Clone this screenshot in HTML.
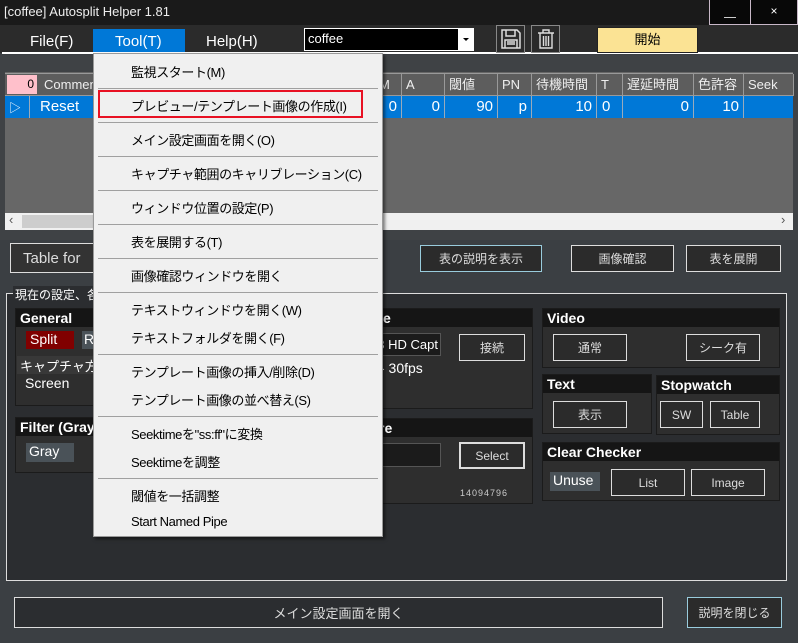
<!DOCTYPE html><html><head><meta charset="utf-8"><style>
*{margin:0;padding:0;box-sizing:border-box}
body{width:798px;height:643px;background:#3b3f43;position:relative;overflow:hidden;font-family:"Liberation Sans","Noto Sans CJK JP",sans-serif;color:#fff;font-size:14px}
.a{position:absolute}
.btn{position:absolute;border:1px solid #ddd;background:#2b2b2b;color:#ddd;font-size:12px;display:flex;align-items:center;justify-content:center}
.pn{position:absolute;background:#2e2e2e;border:1px solid #1b1b1b}
.ph{position:absolute;left:0;right:0;top:0;height:18px;background:#151515;font-weight:bold;font-size:14px;padding-left:4px;line-height:18px}
.mi{position:absolute;left:37px;font-size:13px;color:#000;letter-spacing:-0.4px;white-space:nowrap}
.sep{position:absolute;left:4px;right:4px;height:1px;background:#a0a0a0}
.hc{position:absolute;top:0;height:22px;border-right:1px solid #999;font-size:13px;line-height:22px;padding-left:4px;color:#eee;white-space:nowrap;overflow:hidden}
.rc{position:absolute;top:0;height:22px;border-right:1px solid #9ab;font-size:15px;line-height:22px;text-align:right;padding-right:4px}
</style></head><body>
<div class="a" style="left:0;top:0;width:798px;height:25px;background:#1a1a1a"></div>
<div class="a" style="left:4px;top:4px;font-size:13px;color:#eee">[coffee] Autosplit Helper 1.81</div>
<div class="a" style="left:709px;top:0;width:42px;height:25px;background:#080808;border:1px solid #c8b8c8;border-top:none"></div>
<div class="a" style="left:751px;top:0;width:47px;height:25px;background:#080808;border:1px solid #c8b8c8;border-top:none;border-left:none;text-align:center;font-size:12px;line-height:22px">×</div>
<div class="a" style="left:724px;top:17px;width:12px;height:1px;background:#ccc"></div>
<div class="a" style="left:0;top:25px;width:798px;height:28px;background:#2b2b2b"></div>
<div class="a" style="left:93px;top:29px;width:92px;height:24px;background:#0078d7"></div>
<div class="a" style="left:30px;top:33px;font-size:15px">File(F)</div>
<div class="a" style="left:115px;top:33px;font-size:15px">Tool(T)</div>
<div class="a" style="left:206px;top:33px;font-size:15px">Help(H)</div>
<div class="a" style="left:2px;top:52px;width:796px;height:2px;background:#fff"></div>
<div class="a" style="left:304px;top:28px;width:170px;height:23px;background:#000;border:1px solid #fff;font-size:13px;padding-left:3px;line-height:20px">coffee</div>
<div class="a" style="left:458px;top:29px;width:15px;height:21px;background:#fff"></div>
<div class="a" style="left:463px;top:38px;border-left:3px solid transparent;border-right:3px solid transparent;border-top:3px solid #000"></div>
<div class="a" style="left:496px;top:25px;width:29px;height:28px;border:1px solid #888;background:#2a2a2a"></div>
<svg class="a" style="left:500px;top:29px" width="22" height="20" viewBox="0 0 22 20"><path d="M2 1h15l3 3v15H2z M6 1v6h9V1 M5 11h12v8H5z M7 13h8M7 15h8" fill="none" stroke="#ddd" stroke-width="1.5"/></svg>
<div class="a" style="left:531px;top:25px;width:29px;height:28px;border:1px solid #888;background:#2a2a2a"></div>
<svg class="a" style="left:537px;top:29px" width="18" height="20" viewBox="0 0 18 20"><path d="M1 4h16M6 4V1h6v3M3 4v15h12V4M6.5 7v10M9 7v10M11.5 7v10" fill="none" stroke="#ddd" stroke-width="1.4"/></svg>
<div class="a" style="left:597px;top:27px;width:101px;height:26px;background:#fbe394;border:1px solid #222;color:#000;font-size:13px;text-align:center;line-height:24px">開始</div>

<div class="a" style="left:0;top:55px;width:798px;height:185px;background:#3f4245"></div>
<div class="a" style="left:5px;top:72px;width:788px;height:141px;background:#676767"></div>
<div class="a" style="left:5px;top:73px;width:788px;height:23px;background:#5d5d5d;border-top:1px solid #999;border-bottom:1px solid #999">
<div class="a" style="left:2px;top:1px;width:30px;height:19px;background:#ffc0cb;color:#000;font-size:12px;text-align:right;padding-right:3px;line-height:19px">0</div>
<div class="hc" style="left:35px;width:335px">Comment</div>
<div class="hc" style="left:370px;width:27px">M</div>
<div class="hc" style="left:397px;width:43px">A</div>
<div class="hc" style="left:440px;width:53px">閾値</div>
<div class="hc" style="left:493px;width:34px">PN</div>
<div class="hc" style="left:527px;width:65px">待機時間</div>
<div class="hc" style="left:592px;width:26px">T</div>
<div class="hc" style="left:618px;width:71px">遅延時間</div>
<div class="hc" style="left:689px;width:50px">色許容</div>
<div class="hc" style="left:739px;width:50px">Seek</div>
</div>
<div class="a" style="left:5px;top:96px;width:788px;height:22px;background:#0078d7">
<div class="a" style="left:4px;top:3px;font-size:12px">▷</div>
<div class="rc" style="left:20px;width:1px"></div>
<div class="a" style="left:35px;top:2px;font-size:15px">Reset</div>
<div class="rc" style="left:370px;width:27px">0</div>
<div class="rc" style="left:397px;width:43px">0</div>
<div class="rc" style="left:440px;width:53px">90</div>
<div class="rc" style="left:493px;width:34px">p</div>
<div class="rc" style="left:527px;width:65px">10</div>
<div class="rc" style="left:592px;width:26px;text-align:left;padding-left:5px">0</div>
<div class="rc" style="left:618px;width:71px">0</div>
<div class="rc" style="left:689px;width:50px">10</div>
</div>
<div class="a" style="left:5px;top:213px;width:788px;height:17px;background:#f0f0f0"></div>
<div class="a" style="left:22px;top:215px;width:300px;height:13px;background:#cdcdcd"></div>
<div class="a" style="left:9px;top:212px;color:#555;font-size:13px">‹</div>
<div class="a" style="left:781px;top:212px;color:#555;font-size:13px">›</div>

<div class="btn" style="left:10px;top:243px;width:86px;height:30px;font-size:15px;justify-content:flex-start;padding-left:12px;background:#333">Table for</div>
<div class="btn" style="left:420px;top:245px;width:122px;height:27px;border-color:#9cd">表の説明を表示</div>
<div class="btn" style="left:571px;top:245px;width:103px;height:27px">画像確認</div>
<div class="btn" style="left:686px;top:245px;width:95px;height:27px">表を展開</div>

<div class="a" style="left:6px;top:293px;width:781px;height:288px;background:#2b2d30;border:1px solid #ddd"></div>
<div class="a" style="left:13px;top:286px;background:#2b2d30;font-size:12px;padding:0 2px">現在の設定、各</div>

<div class="pn" style="left:15px;top:308px;width:355px;height:98px"><div class="ph">General</div></div>
<div class="a" style="left:26px;top:331px;width:48px;height:18px;background:#800000;font-size:14px;padding-left:4px">Split</div>
<div class="a" style="left:82px;top:331px;width:15px;height:18px;background:#4a5258;font-size:14px;padding-left:2px">R</div>
<div class="a" style="left:17px;top:356px;width:80px;height:18px;background:#383838;font-size:13px;padding-left:3px;overflow:hidden;white-space:nowrap">キャプチャ方式</div>
<div class="a" style="left:25px;top:375px;font-size:14px">Screen</div>
<div class="pn" style="left:15px;top:417px;width:355px;height:56px"><div class="ph">Filter (Gray)</div></div>
<div class="a" style="left:26px;top:443px;width:48px;height:19px;background:#4a5258;font-size:14px;padding-left:3px">Gray</div>

<div class="pn" style="left:360px;top:308px;width:173px;height:101px"><div class="ph" style="padding-left:22px">e</div></div>
<div class="a" style="left:365px;top:333px;width:76px;height:23px;background:#1b1b1b;border:1px solid #555;font-size:13px;text-align:right;padding-right:2px;line-height:21px;overflow:hidden;white-space:nowrap">3 HD Capt</div>
<div class="btn" style="left:459px;top:334px;width:66px;height:27px">接続</div>
<div class="a" style="left:380px;top:360px;font-size:14px">- 30fps</div>
<div class="pn" style="left:360px;top:418px;width:173px;height:86px"><div class="ph" style="padding-left:18px">re</div></div>
<div class="a" style="left:365px;top:443px;width:76px;height:24px;background:#1b1b1b;border:1px solid #555"></div>
<div class="btn" style="left:459px;top:442px;width:66px;height:27px;border-width:2px">Select</div>
<div class="a" style="left:460px;top:488px;font-size:9px;color:#ccc;letter-spacing:1px">14094796</div>

<div class="pn" style="left:542px;top:308px;width:238px;height:60px"><div class="ph">Video</div></div>
<div class="btn" style="left:553px;top:334px;width:74px;height:27px">通常</div>
<div class="btn" style="left:686px;top:334px;width:74px;height:27px">シーク有</div>
<div class="pn" style="left:542px;top:374px;width:110px;height:60px"><div class="ph">Text</div></div>
<div class="btn" style="left:553px;top:401px;width:74px;height:27px">表示</div>
<div class="pn" style="left:656px;top:375px;width:124px;height:60px"><div class="ph">Stopwatch</div></div>
<div class="btn" style="left:660px;top:401px;width:43px;height:27px">SW</div>
<div class="btn" style="left:710px;top:401px;width:50px;height:27px">Table</div>
<div class="pn" style="left:542px;top:442px;width:238px;height:59px"><div class="ph">Clear Checker</div></div>
<div class="a" style="left:550px;top:472px;width:50px;height:19px;background:#4a5258;font-size:14px;padding-left:3px">Unuse</div>
<div class="btn" style="left:611px;top:469px;width:74px;height:27px">List</div>
<div class="btn" style="left:691px;top:469px;width:74px;height:27px">Image</div>

<div class="btn" style="left:14px;top:597px;width:649px;height:31px;font-size:13px;background:#2b2d30">メイン設定画面を開く</div>
<div class="btn" style="left:687px;top:597px;width:95px;height:31px;border-color:#9cd">説明を閉じる</div>

<div class="a" style="left:93px;top:53px;width:290px;height:484px;background:#f0f0f0;border:1px solid #999;box-shadow:2px 2px 3px rgba(0,0,0,.5)">
<div class="mi" style="top:8px">監視スタート(M)</div>
<div class="sep" style="top:34px"></div>
<div class="a" style="left:4px;top:36px;width:265px;height:28px;border:2px solid #e81123"></div>
<div class="mi" style="top:42px">プレビュー/テンプレート画像の作成(I)</div>
<div class="sep" style="top:68px"></div>
<div class="mi" style="top:76px">メイン設定画面を開く(O)</div>
<div class="sep" style="top:102px"></div>
<div class="mi" style="top:110px">キャプチャ範囲のキャリブレーション(C)</div>
<div class="sep" style="top:136px"></div>
<div class="mi" style="top:144px">ウィンドウ位置の設定(P)</div>
<div class="sep" style="top:170px"></div>
<div class="mi" style="top:178px">表を展開する(T)</div>
<div class="sep" style="top:204px"></div>
<div class="mi" style="top:212px">画像確認ウィンドウを開く</div>
<div class="sep" style="top:238px"></div>
<div class="mi" style="top:246px">テキストウィンドウを開く(W)</div>
<div class="mi" style="top:274px">テキストフォルダを開く(F)</div>
<div class="sep" style="top:300px"></div>
<div class="mi" style="top:308px">テンプレート画像の挿入/削除(D)</div>
<div class="mi" style="top:336px">テンプレート画像の並べ替え(S)</div>
<div class="sep" style="top:362px"></div>
<div class="mi" style="top:370px">Seektimeを"ss:ff"に変換</div>
<div class="mi" style="top:398px">Seektimeを調整</div>
<div class="sep" style="top:424px"></div>
<div class="mi" style="top:432px">閾値を一括調整</div>
<div class="mi" style="top:460px">Start Named Pipe</div>
</div>
</body></html>
